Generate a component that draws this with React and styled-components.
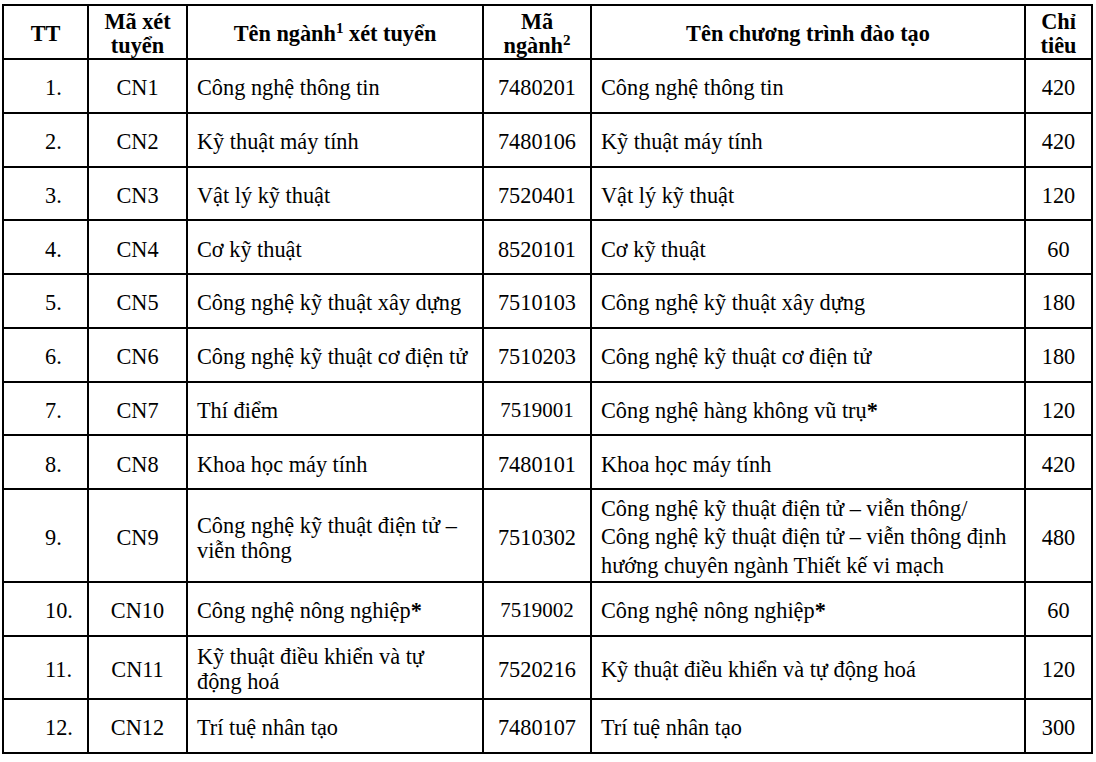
import React from 'react'
import styled, { createGlobalStyle } from 'styled-components'

const GlobalStyle = createGlobalStyle`
  html, body {
    margin: 0;
    padding: 0;
    background: #ffffff;
  }
  body {
    font-family: "Liberation Serif", "Times New Roman", serif;
    color: #000;
  }
`

const rows = [
  { tt: '1.', code: 'CN1', name: 'Công nghệ thông tin', major: '7480201', program: 'Công nghệ thông tin', quota: '420' },
  { tt: '2.', code: 'CN2', name: 'Kỹ thuật máy tính', major: '7480106', program: 'Kỹ thuật máy tính', quota: '420' },
  { tt: '3.', code: 'CN3', name: 'Vật lý kỹ thuật', major: '7520401', program: 'Vật lý kỹ thuật', quota: '120' },
  { tt: '4.', code: 'CN4', name: 'Cơ kỹ thuật', major: '8520101', program: 'Cơ kỹ thuật', quota: '60' },
  { tt: '5.', code: 'CN5', name: 'Công nghệ kỹ thuật xây dựng', major: '7510103', program: 'Công nghệ kỹ thuật xây dựng', quota: '180' },
  { tt: '6.', code: 'CN6', name: 'Công nghệ kỹ thuật cơ điện tử', major: '7510203', program: 'Công nghệ kỹ thuật cơ điện tử', quota: '180' },
  { tt: '7.', code: 'CN7', name: 'Thí điểm', major: '7519001', small: true, program: <>Công nghệ hàng không vũ trụ<Star>*</Star></>, quota: '120' },
  { tt: '8.', code: 'CN8', name: 'Khoa học máy tính', major: '7480101', program: 'Khoa học máy tính', quota: '420' },
  {
    tt: '9.', code: 'CN9', h: 93, name: 'Công nghệ kỹ thuật điện tử – viễn thông', major: '7510302', loose: true,
    program: <>Công nghệ kỹ thuật điện tử – viễn thông/<br />Công nghệ kỹ thuật điện tử – viễn thông định hướng chuyên ngành Thiết kế vi mạch</>,
    quota: '480',
  },
  { tt: '10.', code: 'CN10', name: <>Công nghệ nông nghiệp<Star>*</Star></>, major: '7519002', small: true, program: <>Công nghệ nông nghiệp<Star>*</Star></>, quota: '60' },
  { tt: '11.', code: 'CN11', h: 63, name: 'Kỹ thuật điều khiển và tự động hoá', major: '7520216', program: 'Kỹ thuật điều khiển và tự động hoá', quota: '120' },
  { tt: '12.', code: 'CN12', h: 54, name: 'Trí tuệ nhân tạo', major: '7480107', program: 'Trí tuệ nhân tạo', quota: '300' },
]

function Star({ children }) {
  return <StarMark>{children}</StarMark>
}

const App = () => {
  return (
    <Page>
      <GlobalStyle />
      <Table>
        <colgroup>
          <col style={{ width: 85 }} />
          <col style={{ width: 99 }} />
          <col style={{ width: 296 }} />
          <col style={{ width: 108 }} />
          <col style={{ width: 434 }} />
          <col style={{ width: 67 }} />
        </colgroup>
        <thead>
          <Row $h={54}>
            <Head>TT</Head>
            <Head>Mã xét<br />tuyển</Head>
            <Head>Tên ngành<Sup>1</Sup> xét tuyển</Head>
            <Head>Mã<br />ngành<Sup>2</Sup></Head>
            <Head>Tên chương trình đào tạo</Head>
            <Head>Chỉ<br />tiêu</Head>
          </Row>
        </thead>
        <tbody>
          {rows.map((r) => (
            <Row key={r.code} $h={r.h || 53.75}>
              <Order>{r.tt}</Order>
              <Center>{r.code}</Center>
              <Text>{r.name}</Text>
              <Center $small={r.small}>{r.major}</Center>
              <Text $loose={r.loose}>{r.program}</Text>
              <Center>{r.quota}</Center>
            </Row>
          ))}
        </tbody>
      </Table>
    </Page>
  )
}

const Page = styled.div`
  padding: 4px 0 0 2px;
`

const Table = styled.table`
  border-collapse: collapse;
  table-layout: fixed;
  width: 1091px;
  font-size: 22.3px;
`

const Row = styled.tr`
  height: ${(p) => p.$h}px;
`

const Cell = styled.td`
  border: 2px solid #000;
  padding: 4px 9px 0;
  vertical-align: middle;
  line-height: 25px;
`

const Head = styled(Cell).attrs({ as: 'th' })`
  font-weight: bold;
  text-align: center;
  line-height: 24px;
  padding: 4px 4px 0;
`

const Order = styled(Cell)`
  text-align: left;
  padding-left: 41px;
`

const Center = styled(Cell)`
  text-align: center;
  padding-left: 4px;
  padding-right: 4px;
  font-size: ${(p) => (p.$small ? '21px' : '22.3px')};
`

const Text = styled(Cell)`
  text-align: left;
  line-height: ${(p) => (p.$loose ? '28.5px' : '25px')};
`

const Sup = styled.sup`
  font-size: 15px;
  line-height: 0;
  vertical-align: 8px;
`

const StarMark = styled.span`
  font-weight: bold;
`

export default App
